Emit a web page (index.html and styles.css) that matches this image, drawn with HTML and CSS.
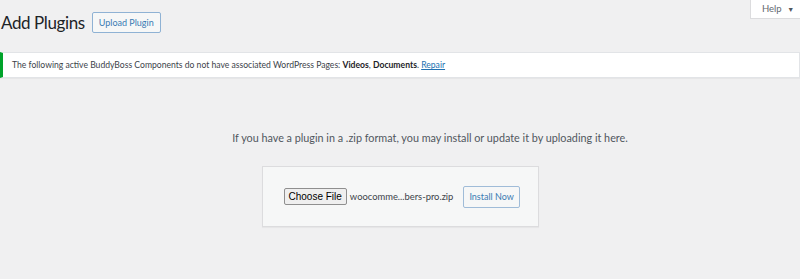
FILE: index.html
```html
<!DOCTYPE html>
<html>
<head>
<meta charset="utf-8">
<link rel="stylesheet" href="styles.css">
</head>
<body>
<div class="help-wrap">
  <button class="help-tab">Help <span class="caret">▼</span></button>
</div>
<div class="wrap">
  <div class="heading">
    <h1 class="title">Add Plugins</h1>
    <a class="upload-btn">Upload Plugin</a>
  </div>
  <div class="notice">
    <p>The following active BuddyBoss Components do not have associated WordPress Pages: <strong>Videos</strong>, <strong>Documents</strong>. <a class="repair">Repair</a></p>
  </div>
  <div class="upload-area">
    <p class="install-help">If you have a plugin in a .zip format, you may install or update it by uploading it here.</p>
    <div class="upload-form">
      <span class="choose">Choose File</span>
      <span class="filename">woocomme...bers-pro.zip</span>
      <span class="install">Install Now</span>
    </div>
  </div>
</div>
</body>
</html>
```

FILE: styles.css
```css
html, body {
  margin: 0;
  padding: 0;
  background: #f0f0f1;
  font-family: "Lato", "Open Sans", sans-serif;
  color: #3c434a;
  width: 800px;
  height: 279px;
  overflow: hidden;
}
.help-wrap {
  position: absolute;
  top: 0;
  right: 0;
}
.help-tab {
  display: block;
  width: 50px;
  height: 19px;
  background: #fff;
  border: 1px solid #dcdcde;
  border-top: none;
  border-right: none;
  font-family: inherit;
  font-size: 9.5px;
  color: #646970;
  padding: 0 0 1px 11px;
  text-align: left;
  white-space: nowrap;
}
.caret {
  font-size: 7px;
  margin-left: 3px;
  color: #50575e;
}
.heading {
  display: flex;
  align-items: center;
  gap: 7px;
  height: 44px;
}
.title {
  margin: 0 0 0 1px;
  font-weight: 400;
  font-size: 17px;
  letter-spacing: -0.4px;
  color: #1d2327;
  white-space: nowrap;
}
.upload-btn {
  display: inline-flex;
  align-items: center;
  box-sizing: border-box;
  height: 21px;
  padding: 0 6px;
  border: 1px solid #8fb2d4;
  border-radius: 2px;
  background: #f6f7f7;
  color: #3a7bb3;
  font-size: 9px;
  white-space: nowrap;
  flex-shrink: 0;
}
.notice {
  margin-top: 8px;
  box-sizing: border-box;
  height: 26px;
  background: #fff;
  border: 1px solid #e2e4e7;
  border-left: 3px solid #00a32a;
  display: flex;
  align-items: center;
  padding-left: 9px;
  box-shadow: 0 1px 1px rgba(0,0,0,0.04);
}
.notice p {
  margin: 0;
  font-size: 8.6px;
  color: #3c434a;
  white-space: nowrap;
}
.notice strong {
  font-weight: 700;
  color: #1d2327;
}
.repair {
  color: #2271b1;
  text-decoration: underline;
}
.upload-area {
  display: flex;
  flex-direction: column;
  align-items: center;
  padding-top: 51px;
}
.install-help {
  margin: 0 0 0 60px;
  font-size: 10.8px;
  color: #50575e;
  height: 18px;
  line-height: 18px;
  white-space: nowrap;
}
.upload-form {
  margin-top: 19px;
  box-sizing: border-box;
  width: 277px;
  height: 61px;
  background: #f6f7f7;
  border: 1px solid #dcdcde;
  display: flex;
  align-items: center;
  padding-left: 21px;
  box-shadow: 0 1px 1px rgba(0,0,0,0.04);
}
.choose {
  box-sizing: border-box;
  height: 17px;
  padding: 0 4px;
  border: 1px solid #8f8f8f;
  background: #efefef;
  border-radius: 2px;
  font-family: "Liberation Sans", Arial, sans-serif;
  font-size: 10px;
  color: #000;
  display: inline-flex;
  align-items: center;
  white-space: nowrap;
  flex-shrink: 0;
}
.filename {
  margin-left: 3px;
  font-size: 9.4px;
  color: #3c434a;
  white-space: nowrap;
  flex-shrink: 0;
}
.install {
  margin-left: 10px;
  box-sizing: border-box;
  height: 22px;
  padding: 0 5px;
  border: 1px solid #a0bcd8;
  border-radius: 2px;
  background: #f6f7f7;
  color: #3a7bb3;
  font-size: 9px;
  display: inline-flex;
  align-items: center;
  white-space: nowrap;
  flex-shrink: 0;
}
```
